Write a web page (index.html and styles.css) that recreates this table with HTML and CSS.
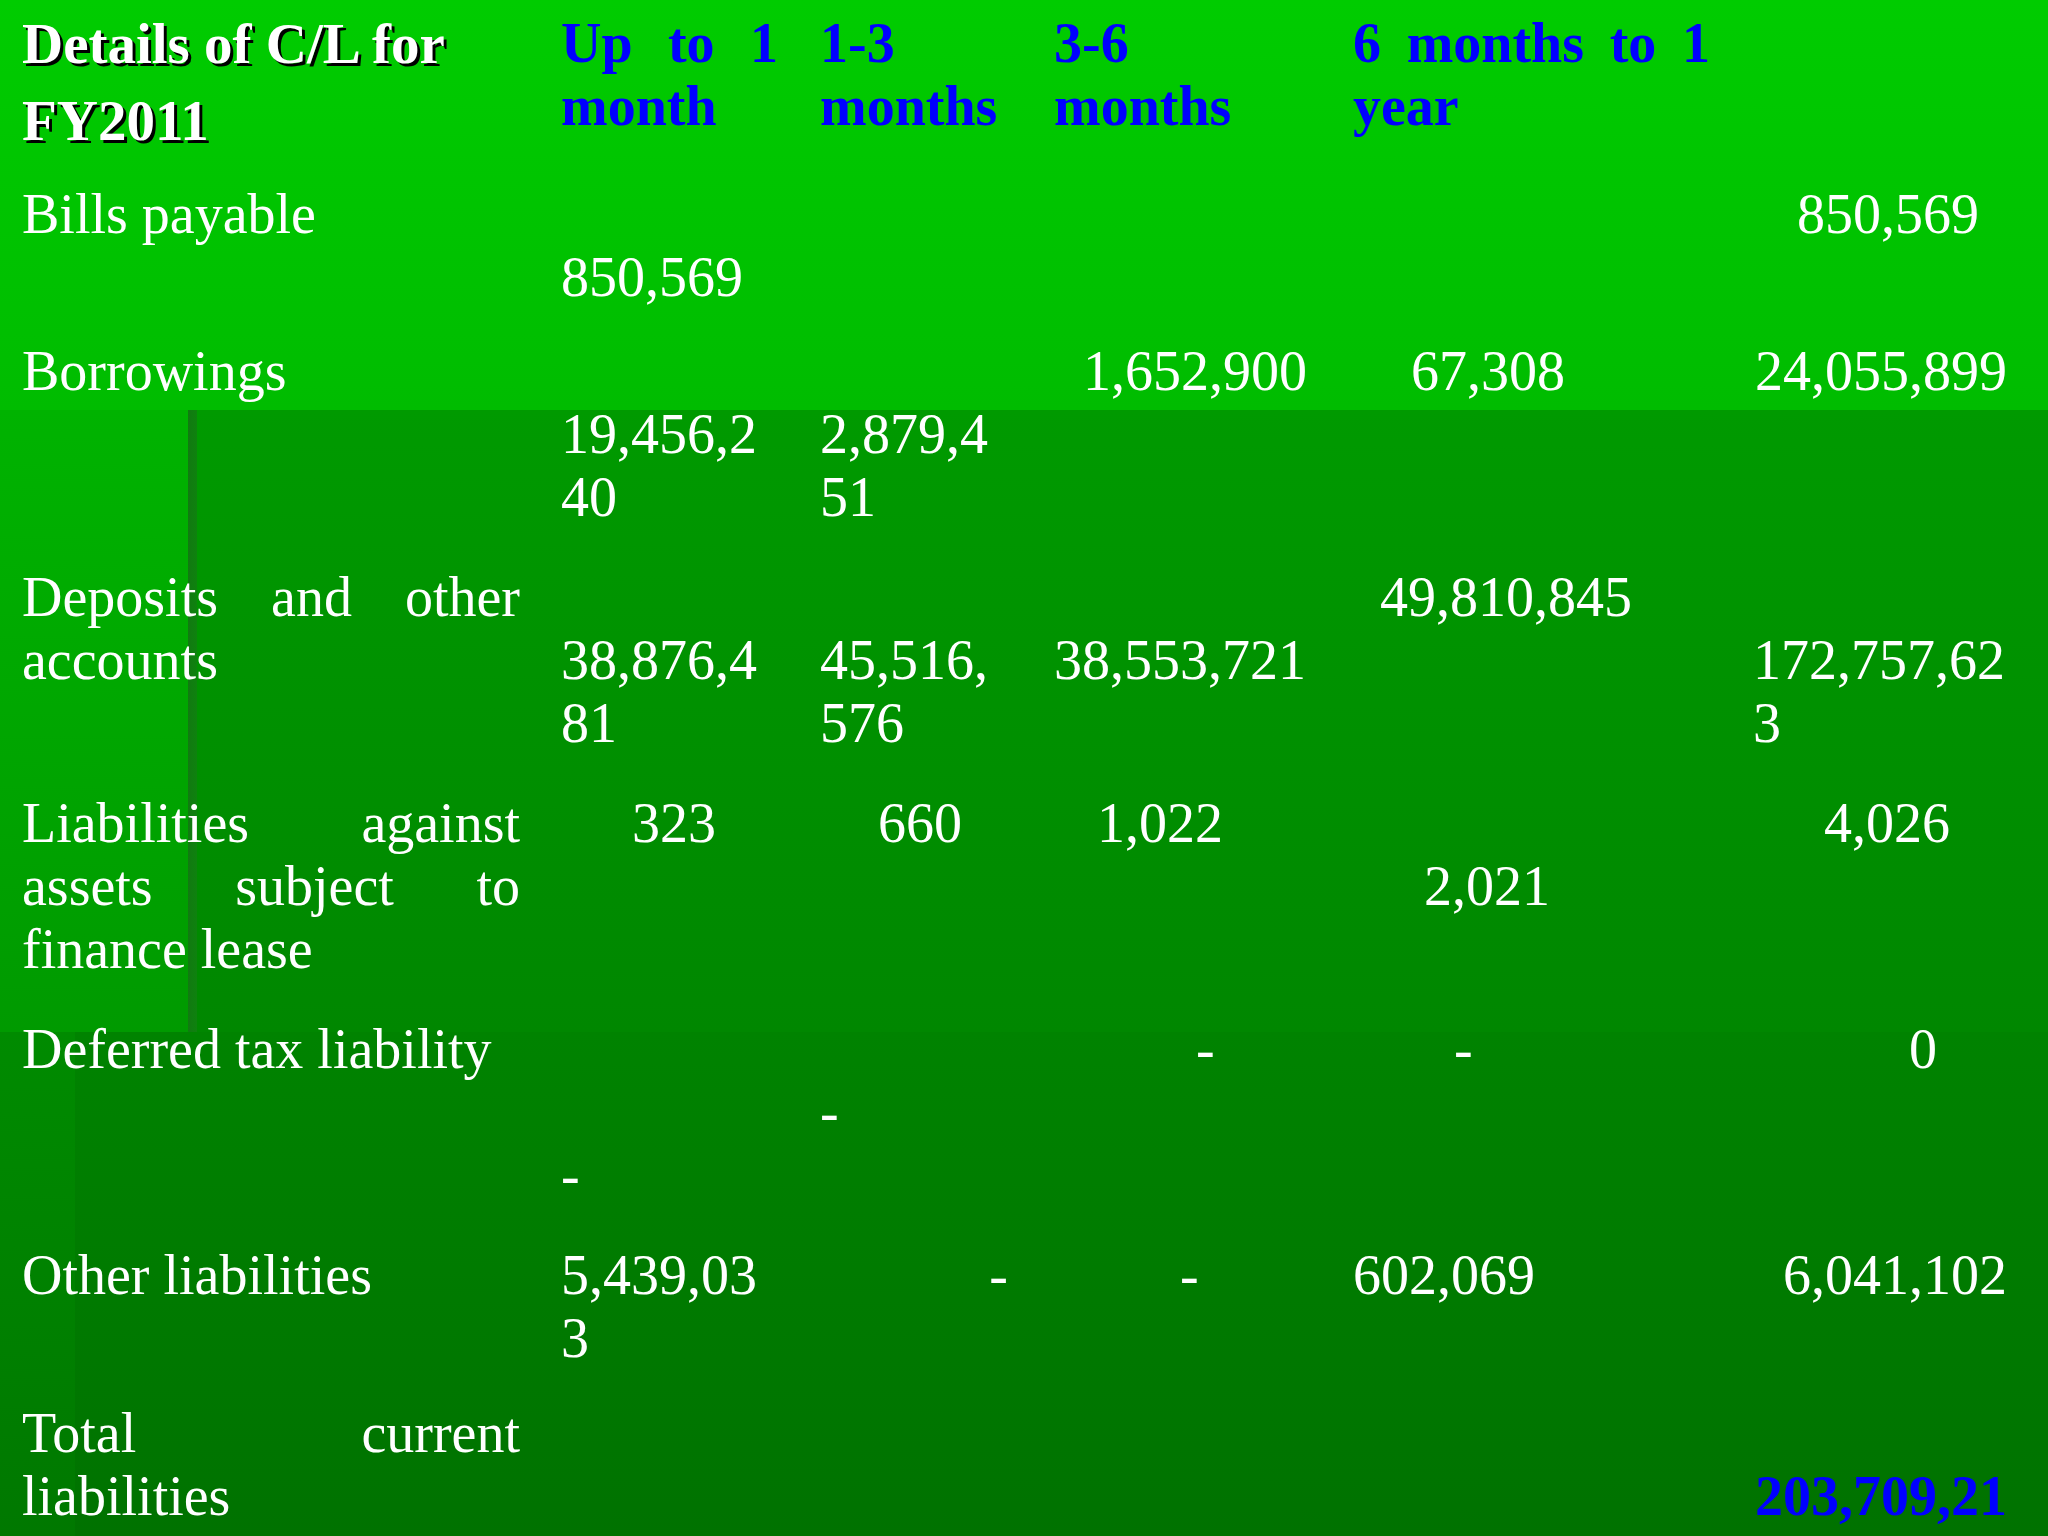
FILE: index.html
```html
<!DOCTYPE html>
<html lang="en">
<head>
<meta charset="utf-8">
<title>Details of C/L for FY2011</title>
<link rel="stylesheet" href="styles.css">
</head>
<body>
<div class="slide">
  <div class="row pb-24">
    <div class="cell c1 title">Details of C/L for FY2011</div>
    <div class="cell c2 hd">Up to 1 month</div>
    <div class="cell c3 hd">1-3 months</div>
    <div class="cell c4 hd">3-6 months</div>
    <div class="cell c5 hd">6 months to 1 year</div>
    <div class="cell c6"></div>
  </div>

  <div class="row pb-31">
    <div class="cell c1 label">Bills payable</div>
    <div class="cell c2 num"><br>850,569</div>
    <div class="cell c3 num"></div>
    <div class="cell c4 num"></div>
    <div class="cell c5 num"></div>
    <div class="cell c6 num right pr-28">850,569</div>
  </div>

  <div class="row pb-37">
    <div class="cell c1 label">Borrowings</div>
    <div class="cell c2 num"><br>19,456,240</div>
    <div class="cell c3 num"><br>2,879,451</div>
    <div class="cell c4 num right">1,652,900</div>
    <div class="cell c5 num in-58">67,308</div>
    <div class="cell c6 num right">24,055,899</div>
  </div>

  <div class="row pb-37">
    <div class="cell c1 label">Deposits and other accounts</div>
    <div class="cell c2 num"><br>38,876,481</div>
    <div class="cell c3 num"><br>45,516,576</div>
    <div class="cell c4 num"><br>38,553,721</div>
    <div class="cell c5 num in-27">49,810,845</div>
    <div class="cell c6 num"><br>172,757,623</div>
  </div>

  <div class="row pb-37">
    <div class="cell c1 label">Liabilities against assets subject to finance lease</div>
    <div class="cell c2 num in-71">323</div>
    <div class="cell c3 num in-58">660</div>
    <div class="cell c4 num in-43">1,022</div>
    <div class="cell c5 num in-71"><br>2,021</div>
    <div class="cell c6 num right pr-57">4,026</div>
  </div>

  <div class="row pb-37">
    <div class="cell c1 label">Deferred tax liability</div>
    <div class="cell c2 num"><br><br>-</div>
    <div class="cell c3 num"><br>-</div>
    <div class="cell c4 num in-142">-</div>
    <div class="cell c5 num in-101">-</div>
    <div class="cell c6 num right pr-70">0</div>
  </div>

  <div class="row pb-32">
    <div class="cell c1 label">Other liabilities</div>
    <div class="cell c2 num">5,439,033</div>
    <div class="cell c3 num right">-</div>
    <div class="cell c4 num in-126">-</div>
    <div class="cell c5 num">602,069</div>
    <div class="cell c6 num right">6,041,102</div>
  </div>

  <div class="row">
    <div class="cell c1 label">Total current liabilities</div>
    <div class="cell c2 num"></div>
    <div class="cell c3 num"></div>
    <div class="cell c4 num"></div>
    <div class="cell c5 num"></div>
    <div class="cell c6 num right total"><br>203,709,21</div>
  </div>
</div>
</body>
</html>
```

FILE: styles.css
```css
html, body {
  margin: 0;
  padding: 0;
}

body {
  width: 2048px;
  height: 1536px;
  overflow: hidden;
  background: #007400;
}

.slide {
  width: 2048px;
  height: 1536px;
  overflow: hidden;
  font-family: "Liberation Serif", "Times New Roman", serif;
  font-size: 56px;
  line-height: 63px;
  color: #ffffff;
  background:
    linear-gradient(90deg, #117a11, #0e820e) 188px 410px / 9px 622px no-repeat,
    linear-gradient(#009a00, #008700) 197px 410px / 1851px 622px no-repeat,
    linear-gradient(#00b300, #009a00) 0 410px / 188px 622px no-repeat,
    linear-gradient(#008300, #007200) 75px 1032px / 1973px 504px no-repeat,
    linear-gradient(#008b00, #007800) 0 1032px / 75px 504px no-repeat,
    linear-gradient(#00cc00, #00bc00) 0 0 / 2048px 410px no-repeat;
}

.row {
  display: grid;
  grid-template-columns: 539px 259px 234px 299px 400px 254px;
  align-items: start;
  padding-left: 22px;
}

.pb-24 { padding-bottom: 24px; }
.pb-31 { padding-bottom: 31px; }
.pb-32 { padding-bottom: 32px; }
.pb-37 { padding-bottom: 37px; }

.cell {
  min-width: 0;
}

.c1 { padding-right: 41px; }
.c2 { padding-right: 42px; }
.c3 { padding-right: 46px; }
.c4 { padding-right: 46px; }
.c5 { padding-right: 43px; }
.c6 { padding-right: 0; }

.title {
  font-size: 57px;
  font-weight: bold;
  line-height: 77px;
  padding-top: 5px;
  text-shadow: 3px 3px 0 #000000;
}

.hd {
  font-weight: bold;
  color: #0000ff;
  text-align: justify;
  padding-top: 12px;
}

.label {
  text-align: justify;
}

.num {
  word-break: break-all;
}

.right { text-align: right; }

.pr-28 { padding-right: 28px; }
.pr-57 { padding-right: 57px; }
.pr-70 { padding-right: 70px; }

.in-27 { padding-left: 27px; }
.in-43 { padding-left: 43px; }
.in-58 { padding-left: 58px; }
.in-71 { padding-left: 71px; }
.in-101 { padding-left: 101px; }
.in-126 { padding-left: 126px; }
.in-142 { padding-left: 142px; }

.total {
  font-weight: bold;
  color: #0000ff;
}
```
